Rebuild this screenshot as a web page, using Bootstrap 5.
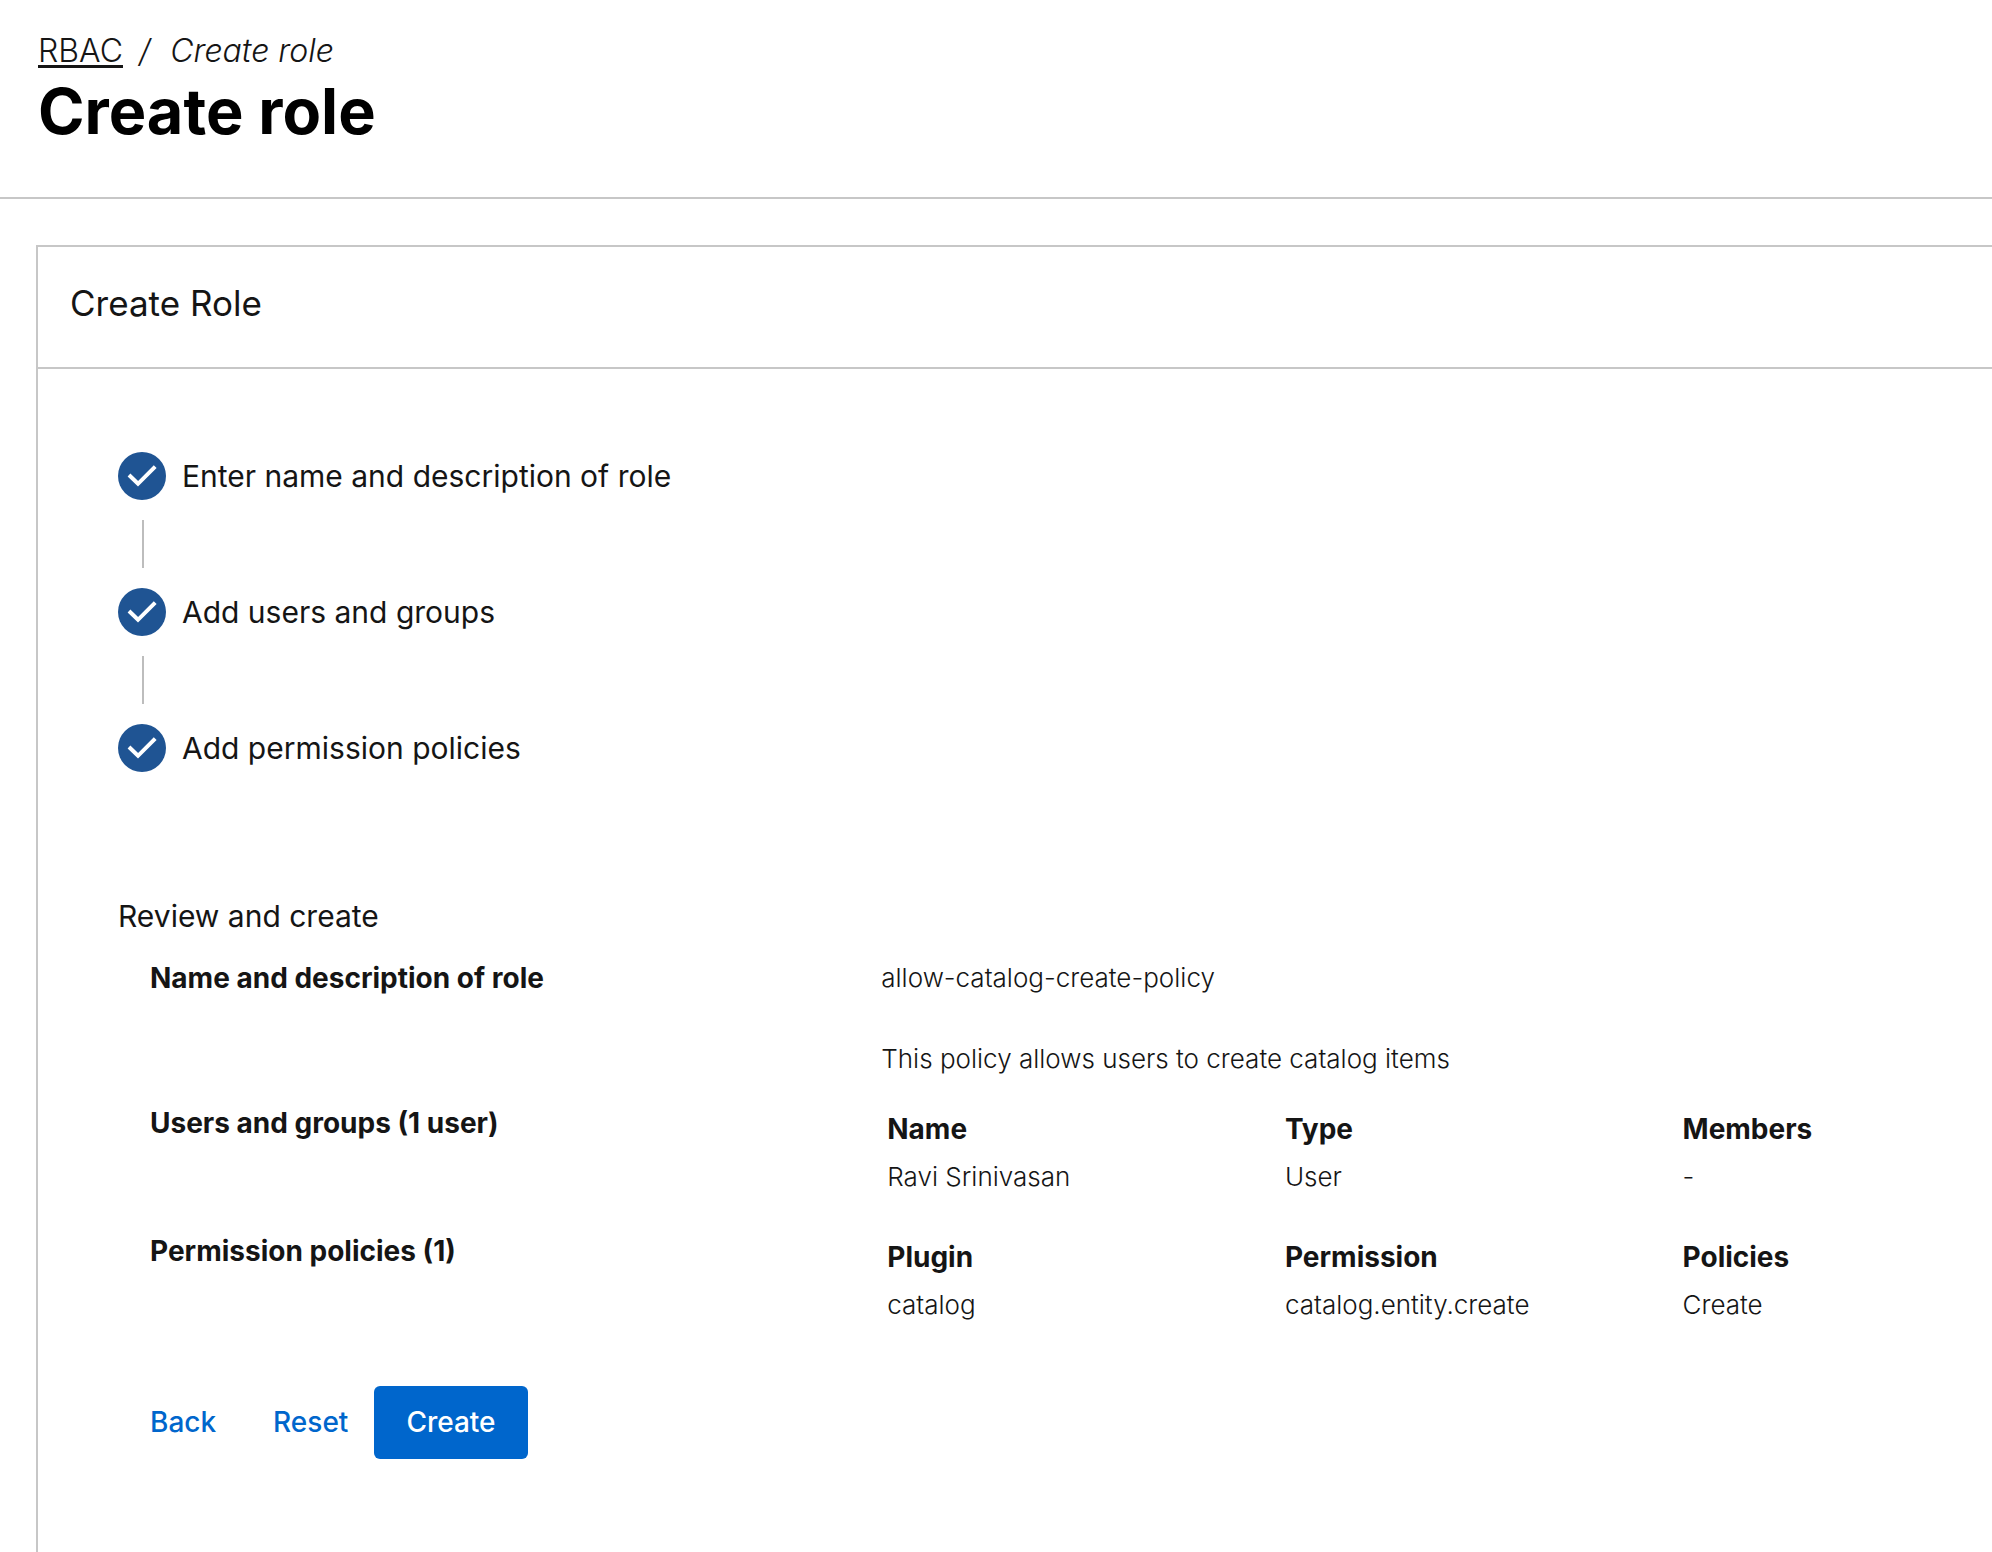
<!DOCTYPE html>
<html lang="en">
<head>
<meta charset="utf-8">
<meta name="viewport" content="width=device-width, initial-scale=1">
<title>Create role</title>
<link rel="stylesheet" href="https://cdn.jsdelivr.net/npm/bootstrap@5.3.0/dist/css/bootstrap.min.css">
<style>
  :root { --line: #c7c7c7; --ink: #151515; --action: #0066cc; }
  body { font-family: Inter, "Liberation Sans", sans-serif; font-size: 26px; line-height: 40px; font-weight: 300; color: var(--ink); background: #fff; }
  .page-head { padding: 31px 38px 46px; border-bottom: 2px solid var(--line); }
  .page-head .breadcrumb { font-size: 32px; line-height: 40px; }
  .page-head .breadcrumb a { color: var(--ink); text-underline-offset: 3px; text-decoration-thickness: 3px; }
  .page-head .breadcrumb-item + .breadcrumb-item { padding-left: 16px; }
  .page-head .breadcrumb-item + .breadcrumb-item::before { color: var(--ink); padding-right: 20px; }
  .page-head .breadcrumb-item.active { color: var(--ink); font-style: italic; }
  .page-head h1 { font-size: 63px; line-height: 80px; font-weight: 700; color: #000; }
  .role-card { margin: 46px 0 0 36px; border: 2px solid var(--line); border-right: 0; border-bottom: 0; border-radius: 0; }
  .role-card .card-header { padding: 28px 32px 36px; background: none; border-bottom: 2px solid var(--line); }
  .role-card h2 { font-size: 35px; line-height: 56px; font-weight: 400; }
  .role-card .card-body { padding: 83px 0 80px 80px; color: var(--ink); }
  .step-label, .review-title { font-size: 30px; line-height: 48px; font-weight: 400; }
  .step-icon { width: 48px; height: 48px; flex: none; }
  .step-line { width: 2px; height: 48px; margin: 20px 0 20px 24px; background: #bdbdbd; }
  .review-title { margin: 120px 0 18px; }
  .review { padding-left: 32px; }
  .review-name { flex: 0 0 39.7%; }
  .review-name, .review-table th { font-size: 28px; font-weight: 700; }
  .review-gap { margin-bottom: 41px; }
  .review-row { margin-bottom: 30px; }
  .review-values { padding-top: 2px; }
  .review-table { table-layout: fixed; width: 100%; }
  .review-table th, .review-table td { padding: 4px 6px; }
  .review-table col { width: 35.8%; }
  .review-table col:last-child { width: 28.4%; }
  .form-actions { margin-top: 57px; }
  .btn-flow { --bs-btn-font-size: 28px; --bs-btn-line-height: 41px; --bs-btn-font-weight: 500; --bs-btn-color: var(--action); --bs-btn-hover-color: var(--action); --bs-btn-padding-y: 16px; --bs-btn-padding-x: 32px; --bs-btn-border-width: 0; --bs-btn-border-radius: 6px; }
  .btn-flow.plain { --bs-btn-padding-x: 0; }
  .btn-flow.plain:first-child { margin-right: 57px; }
  .btn-flow.solid { --bs-btn-color: #fff; --bs-btn-bg: var(--action); --bs-btn-hover-color: #fff; --bs-btn-hover-bg: #004d99; margin-left: 26px; }
</style>
<script src="https://cdn.jsdelivr.net/npm/bootstrap@5.3.0/dist/js/bootstrap.bundle.min.js" defer></script>
</head>
<body class="d-flex flex-column min-vh-100">
<svg class="d-none" aria-hidden="true">
  <symbol id="done" viewBox="0 0 24 24"><circle cx="12" cy="12" r="12" fill="#1f5493"/><path d="M5.5 11.5 10 15.9 18.6 7.3" fill="none" stroke="#fff" stroke-width="2"/></symbol>
</svg>
<header class="page-head">
  <nav aria-label="breadcrumb">
    <ol class="breadcrumb mb-0">
      <li class="breadcrumb-item"><a href="#">RBAC</a></li>
      <li class="breadcrumb-item active" aria-current="page">Create role</li>
    </ol>
  </nav>
  <h1 class="mb-0">Create role</h1>
</header>
<main class="card role-card flex-grow-1">
  <div class="card-header"><h2 class="mb-0">Create Role</h2></div>
  <div class="card-body">
    <ol class="list-unstyled mb-0">
      <li>
        <div class="d-flex gap-3"><svg class="step-icon" aria-hidden="true"><use href="#done"/></svg><span class="step-label">Enter name and description of role</span></div>
        <div class="step-line"></div>
      </li>
      <li>
        <div class="d-flex gap-3"><svg class="step-icon" aria-hidden="true"><use href="#done"/></svg><span class="step-label">Add users and groups</span></div>
        <div class="step-line"></div>
      </li>
      <li>
        <div class="d-flex gap-3"><svg class="step-icon" aria-hidden="true"><use href="#done"/></svg><span class="step-label">Add permission policies</span></div>
      </li>
    </ol>
    <h3 class="review-title">Review and create</h3>
    <div class="review">
      <section class="d-flex">
        <div class="review-name">Name and description of role</div>
        <div class="flex-grow-1">
          <p class="review-gap">allow-catalog-create-policy</p>
          <p class="mb-4">This policy allows users to create catalog items</p>
        </div>
      </section>
      <section class="d-flex review-row">
        <div class="review-name">Users and groups (1 user)</div>
        <div class="flex-grow-1 review-values">
          <table class="review-table">
            <colgroup><col><col><col></colgroup>
            <thead><tr><th scope="col">Name</th><th scope="col">Type</th><th scope="col">Members</th></tr></thead>
            <tbody><tr><td>Ravi Srinivasan</td><td>User</td><td>-</td></tr></tbody>
          </table>
        </div>
      </section>
      <section class="d-flex">
        <div class="review-name">Permission policies (1)</div>
        <div class="flex-grow-1 review-values">
          <table class="review-table">
            <colgroup><col><col><col></colgroup>
            <thead><tr><th scope="col">Plugin</th><th scope="col">Permission</th><th scope="col">Policies</th></tr></thead>
            <tbody><tr><td>catalog</td><td>catalog.entity.create</td><td>Create</td></tr></tbody>
          </table>
        </div>
      </section>
      <div class="d-flex form-actions">
        <button type="button" class="btn btn-flow plain">Back</button>
        <button type="button" class="btn btn-flow plain">Reset</button>
        <button type="button" class="btn btn-flow solid">Create</button>
      </div>
    </div>
  </div>
</main>
</body>
</html>
